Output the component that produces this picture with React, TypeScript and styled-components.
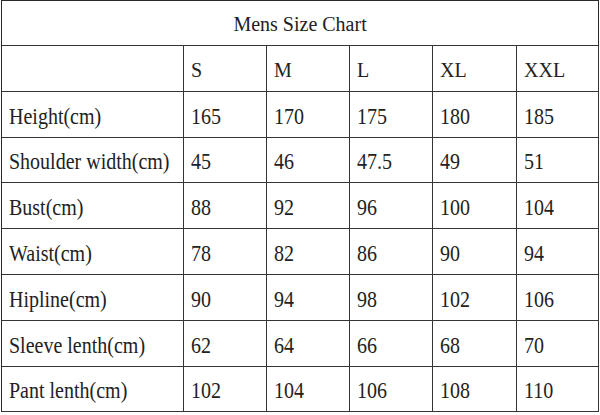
import React from "react";
import styled, { createGlobalStyle } from "styled-components";

const GlobalStyle = createGlobalStyle`
  html, body {
    margin: 0;
    padding: 0;
    background: #ffffff;
  }
  body {
    width: 600px;
    height: 415px;
    overflow: hidden;
    font-family: "Liberation Serif", serif;
  }
`;

const Page = styled.div`
  width: 600px;
  height: 415px;
  padding-left: 1px;
  box-sizing: border-box;
`;

const Table = styled.table`
  border-collapse: separate;
  border-spacing: 0;
  table-layout: fixed;
  width: 598px;
  border-top: 1px solid #2a2a2a;
  border-left: 1px solid #2a2a2a;
  font-family: "Liberation Serif", serif;
  font-size: 20px;
  color: #222222;
`;

const Col = styled.col<{ $w: number }>`
  width: ${(p) => p.$w}px;
`;

const Row = styled.tr<{ $h: number }>`
  height: ${(p) => p.$h}px;
`;

const Cell = styled.td<{ $h: number; $pt: number }>`
  box-sizing: border-box;
  height: ${(p) => p.$h}px;
  padding: ${(p) => p.$pt}px 0 0 7px;
  border-right: 1px solid #353535;
  border-bottom: 1px solid #353535;
  vertical-align: middle;
  text-align: left;
  white-space: nowrap;
  line-height: 23px;
  font-family: "Liberation Serif", serif;
`;

const TitleCell = styled.td<{ $h: number }>`
  box-sizing: border-box;
  height: ${(p) => p.$h}px;
  padding: 2px 0 0 0;
  border-right: 1px solid #2a2a2a;
  border-bottom: 1px solid #353535;
  vertical-align: middle;
  text-align: center;
  line-height: 23px;
  font-family: "Liberation Serif", serif;
`;

const Text = styled.span<{ $stretch?: boolean }>`
  display: inline-block;
  font-family: "Liberation Serif", serif;
  transform-origin: 50% 77%;
  transform: ${(p) => (p.$stretch ? "scaleY(1.15)" : "none")};
`;

const sizes = ["S", "M", "L", "XL", "XXL"];

const rows: [string, string[]][] = [
  ["Height(cm)", ["165", "170", "175", "180", "185"]],
  ["Shoulder width(cm)", ["45", "46", "47.5", "49", "51"]],
  ["Bust(cm)", ["88", "92", "96", "100", "104"]],
  ["Waist(cm)", ["78", "82", "86", "90", "94"]],
  ["Hipline(cm)", ["90", "94", "98", "102", "106"]],
  ["Sleeve lenth(cm)", ["62", "64", "66", "68", "70"]],
  ["Pant lenth(cm)", ["102", "104", "106", "108", "110"]],
];

const rowHeights = [46, 45, 46, 46, 46, 46, 45];
const colWidths = [182, 83, 83, 83, 84, 82];

export default function App() {
  return (
    <>
      <GlobalStyle />
      <Page>
        <Table>
          <colgroup>
            {colWidths.map((w, i) => (
              <Col key={i} $w={w} />
            ))}
          </colgroup>
          <tbody>
            <Row $h={45}>
              <TitleCell $h={45} colSpan={6}>
                <Text>Mens Size Chart</Text>
              </TitleCell>
            </Row>
            <Row $h={46}>
              <Cell $h={46} $pt={4} />
              {sizes.map((s) => (
                <Cell key={s} $h={46} $pt={4}>
                  <Text>{s}</Text>
                </Cell>
              ))}
            </Row>
            {rows.map(([label, values], i) => (
              <Row key={label} $h={rowHeights[i]}>
                <Cell $h={rowHeights[i]} $pt={5}>
                  <Text $stretch>{label}</Text>
                </Cell>
                {values.map((v, j) => (
                  <Cell key={j} $h={rowHeights[i]} $pt={5}>
                    <Text $stretch>{v}</Text>
                  </Cell>
                ))}
              </Row>
            ))}
          </tbody>
        </Table>
      </Page>
    </>
  );
}
